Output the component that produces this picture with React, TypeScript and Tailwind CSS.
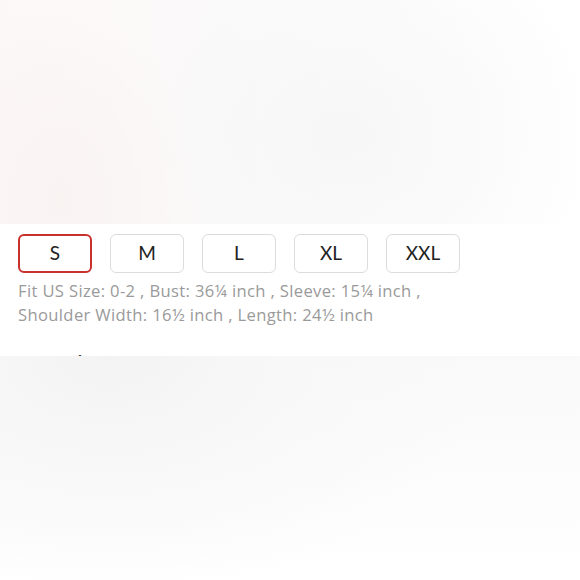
const sizes = ["S", "M", "L", "XL", "XXL"];

function SizePicker({ active }: { active: string }) {
  return (
    <div className="flex gap-[18px]">
      {sizes.map((s) => (
        <button
          key={s}
          className={`flex h-[39px] w-[74px] items-center justify-center rounded-[6px] text-[19px] text-[#222] ${
            s === active
              ? "border-2 border-[#c8322d]"
              : "border border-[#dcdcdc]"
          }`}
        >
          {s}
        </button>
      ))}
    </div>
  );
}

export default function App() {
  return (
    <div className="flex h-[580px] w-[580px] flex-col bg-white font-['Lato','Open_Sans',sans-serif]">
      {/* product photo area, blurred out */}
      <div className="h-[224px] shrink-0 bg-[radial-gradient(ellipse_140px_200px_at_60px_200px,#f9f3f2,transparent),radial-gradient(ellipse_260px_200px_at_345px_135px,#f7f7f7,transparent),linear-gradient(90deg,#fcf8f7,#fbfafa_40%,#fdfdfd_75%,#ffffff)]" />

      <div className="h-[132px] shrink-0 overflow-hidden bg-white px-[18px] pt-[10px]">
        <SizePicker active="S" />
        <p className="mt-[6px] font-['Open_Sans',sans-serif] text-[16.6px] leading-[24px] tracking-[0.35px] text-[#9a9a9a]">
          Fit US Size: 0-2 , Bust: 36¼ inch , Sleeve: 15¼ inch ,
          <br />
          Shoulder Width: 16½ inch , Length: 24½ inch
        </p>
        <h3 className="mt-[25px] text-[21px] font-bold leading-none text-[#222]">
          Quantity
        </h3>
      </div>

      <div className="flex-1 bg-[radial-gradient(ellipse_380px_240px_at_110px_0px,#f3f3f3,#f8f8f8_45%,transparent),linear-gradient(180deg,#f9f9f9,#ffffff)]" />
    </div>
  );
}
